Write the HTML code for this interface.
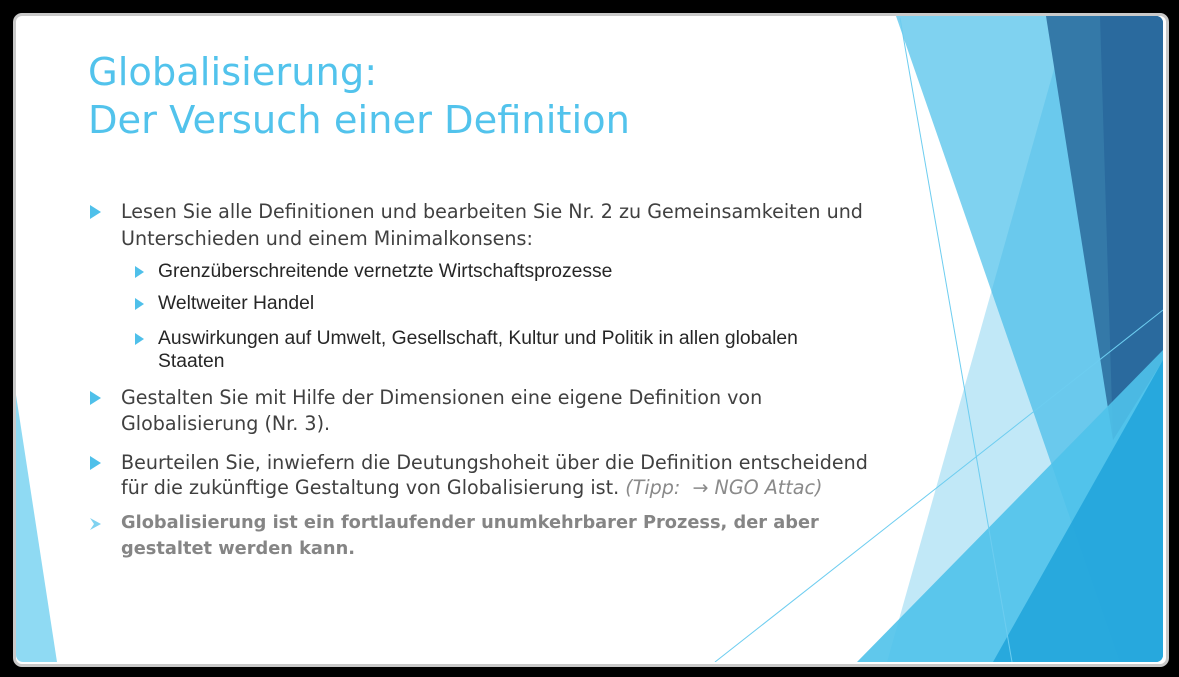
<!DOCTYPE html>
<html><head><meta charset="utf-8"><style>
html,body{margin:0;padding:0;background:#000;width:1179px;height:677px;overflow:hidden}
.slide{position:absolute;left:13px;top:13px;width:1150px;height:648px;background:#fff;border:3px solid #c9c9c9;border-radius:9px;overflow:hidden}
svg{position:absolute;left:0;top:0}
.t{position:absolute;white-space:nowrap}
.title{font-family:"DejaVu Sans",sans-serif;font-size:38.4px;color:#52c3ec;left:88px}
.b{font-family:"DejaVu Sans",sans-serif;font-size:19.1px;color:#404040;left:121px}
.s{font-family:"Liberation Sans",sans-serif;font-size:19.3px;color:#262626;left:158px}
.g{font-family:"DejaVu Sans",sans-serif;font-weight:bold;font-size:17.8px;color:#858585;left:121px}
.i{font-style:italic;color:#8a8a8a}
</style></head><body>
<div class="slide"></div>
<svg width="1179" height="677" viewBox="0 0 1179 677">
<defs><clipPath id="c"><rect x="16" y="16" width="1147" height="646" rx="7"/></clipPath></defs>
<g clip-path="url(#c)">
<polygon points="16,395 16,662 57,662" fill="#8fdaf3"/>
<polygon points="900,16 1000,16 993,285" fill="#e2f5fb"/>
<polygon points="896,16 1163,16 1163,662 1120,662" fill="#7fd2f0"/>
<polygon points="1069,16 1163,16 1163,662 887,662" fill="#3fb8e6" opacity="0.32"/>
<polygon points="1046,16 1163,16 1163,360 1113,440" fill="#3479a8"/>
<polygon points="1100,16 1163,16 1163,360 1113,440" fill="#2a6a9e"/>
<polygon points="857,662 1163,350 1163,662" fill="#4fc2ea" opacity="0.9"/>
<polygon points="993,662 1163,360 1163,662" fill="#22a5dc" opacity="0.9"/>
<line x1="900" y1="18" x2="1012" y2="662" stroke="#6dcdf0" stroke-width="1"/>
<line x1="715" y1="662" x2="1163" y2="310" stroke="#6dcdf0" stroke-width="1"/>
<polygon points="90,205 101,212 90,219" fill="#4fc0ea"/>
<polygon points="135,266 144,272 135,278" fill="#4fc0ea"/>
<polygon points="135,298 144,304 135,310" fill="#4fc0ea"/>
<polygon points="135,333 144,339 135,345" fill="#4fc0ea"/>
<polygon points="90,391 101,398 90,405" fill="#4fc0ea"/>
<polygon points="90,456 101,463 90,470" fill="#4fc0ea"/>
<polygon points="90,518 101,524 90,530 94,524" fill="#7fd2f0"/>
</g>
</svg>
<div class="t title" style="top:50px">Globalisierung:</div>
<div class="t title" style="top:98px">Der Versuch einer Definition</div>
<div class="t b" style="top:200px">Lesen Sie alle Definitionen und bearbeiten Sie Nr. 2 zu Gemeinsamkeiten und</div>
<div class="t b" style="top:227px">Unterschieden und einem Minimalkonsens:</div>
<div class="t s" style="top:261px">Grenzüberschreitende vernetzte Wirtschaftsprozesse</div>
<div class="t s" style="top:293px">Weltweiter Handel</div>
<div class="t s" style="top:328px">Auswirkungen auf Umwelt, Gesellschaft, Kultur und Politik in allen globalen</div>
<div class="t s" style="top:351px">Staaten</div>
<div class="t b" style="top:386px">Gestalten Sie mit Hilfe der Dimensionen eine eigene Definition von</div>
<div class="t b" style="top:412px">Globalisierung (Nr. 3).</div>
<div class="t b" style="top:451px">Beurteilen Sie, inwiefern die Deutungshoheit über die Definition entscheidend</div>
<div class="t b" style="top:476px">für die zukünftige Gestaltung von Globalisierung ist. <span class="i">(Tipp: &nbsp;→ NGO Attac)</span></div>
<div class="t g" style="top:512px">Globalisierung ist ein fortlaufender unumkehrbarer Prozess, der aber</div>
<div class="t g" style="top:538px">gestaltet werden kann.</div>
</body></html>
